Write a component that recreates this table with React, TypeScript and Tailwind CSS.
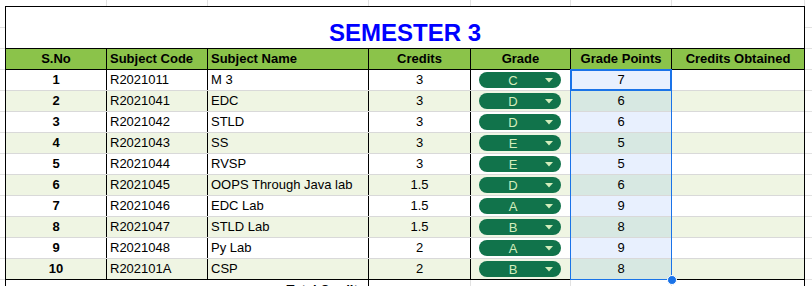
import { ChevronDown } from 'lucide-react';

type Row = { no: number; code: string; name: string; credits: string; grade: string; points: number };

const ROWS: Row[] = [
  { no: 1, code: 'R2021011', name: 'M 3', credits: '3', grade: 'C', points: 7 },
  { no: 2, code: 'R2021041', name: 'EDC', credits: '3', grade: 'D', points: 6 },
  { no: 3, code: 'R2021042', name: 'STLD', credits: '3', grade: 'D', points: 6 },
  { no: 4, code: 'R2021043', name: 'SS', credits: '3', grade: 'E', points: 5 },
  { no: 5, code: 'R2021044', name: 'RVSP', credits: '3', grade: 'E', points: 5 },
  { no: 6, code: 'R2021045', name: 'OOPS Through Java lab', credits: '1.5', grade: 'D', points: 6 },
  { no: 7, code: 'R2021046', name: 'EDC Lab', credits: '1.5', grade: 'A', points: 9 },
  { no: 8, code: 'R2021047', name: 'STLD Lab', credits: '1.5', grade: 'B', points: 8 },
  { no: 9, code: 'R2021048', name: 'Py Lab', credits: '2', grade: 'A', points: 9 },
  { no: 10, code: 'R202101A', name: 'CSP', credits: '2', grade: 'B', points: 8 },
];

// column widths incl. right border, so the lines land where the sheet has them
const COLS = 'grid grid-cols-[101px_101px_161px_102px_100px_101px_132px]';
const HEADERS = ['S.No', 'Subject Code', 'Subject Name', 'Credits', 'Grade', 'Grade Points', 'Credits Obtained'];

function GradeChip({ grade }: { grade: string }) {
  return (
    <div className="ml-[8px] mt-[2px] w-[82px] h-[16px] rounded-full bg-[#11734b] flex items-center text-[#d4edbc]">
      <span className="flex-1 text-center text-[13px] leading-none pl-[2px]">{grade}</span>
      <svg width="8" height="5" viewBox="0 0 8 5" className="mr-[8px]">
        <path d="M0 0h8L4 4.5z" fill="#d4edbc" />
      </svg>
    </div>
  );
}

function SideStrip({ w }: { w: string }) {
  return (
    <div className={`${w} flex flex-col`}>
      <div className="h-[22px] border-b border-[#e2e2e2]" />
      {Array.from({ length: 13 }).map((_, i) => (
        <div key={i} className="h-[21px] shrink-0 border-b border-[#e2e2e2]" />
      ))}
    </div>
  );
}

export default function App() {
  return (
    <div className="relative w-[812px] h-[286px] overflow-hidden bg-white text-black font-['Liberation_Sans',Arial,sans-serif]">
      {/* sheet gridlines above the table */}
      <div className="flex h-[6px]">
        <div className="w-[107px] border-r border-[#e2e2e2]" />
        <div className="w-[101px] border-r border-[#e2e2e2]" />
        <div className="w-[161px] border-r border-[#e2e2e2]" />
        <div className="w-[102px] border-r border-[#e2e2e2]" />
        <div className="w-[100px] border-r border-[#e2e2e2]" />
        <div className="w-[101px] border-r border-[#e2e2e2]" />
        <div className="w-[133px] border-r border-[#e2e2e2]" />
      </div>

      <div className="flex">
        <SideStrip w="w-[5px]" />

        <div className="w-[800px] border-l border-r border-t border-black">
          {/* Title */}
          <div className="h-[42px] border-b border-black flex items-end justify-center pb-[3px]">
            <span className="text-[24px] leading-[24px] font-bold text-[#0000ff]">SEMESTER 3</span>
          </div>

          {/* Header */}
          <div className={`${COLS} h-[21px] bg-[#8bc34a] border-b border-black text-[13px] font-bold`}>
            {HEADERS.map((h, i) => (
              <div
                key={h}
                className={`leading-[20px] text-center ${i < 6 ? 'border-r border-black' : ''} ${i === 1 || i === 2 ? 'text-left pl-[3px]' : ''}`}>
                {h}
              </div>
            ))}
          </div>

          {/* Body */}
          {ROWS.map((r) => {
            const striped = r.no % 2 === 0;
            return (
              <div
                key={r.no}
                className={`${COLS} h-[21px] text-[13px] leading-[20px] border-b ${r.no === 10 ? 'border-black' : 'border-[#d9d9d9]'} ${striped ? 'bg-[#eff5e3]' : 'bg-white'}`}>
                <div className="border-r border-black text-center font-bold">{r.no}</div>
                <div className="border-r border-black pl-[3px]">{r.code}</div>
                <div className="border-r border-black pl-[3px] whitespace-nowrap">{r.name}</div>
                <div className="border-r border-black text-center">{r.credits}</div>
                <div className="border-r border-black">
                  <GradeChip grade={r.grade} />
                </div>
                <div className={`border-r border-black text-center ${striped ? 'bg-[#d7e8e2]' : 'bg-[#e8f0fe]'}`}>{r.points}</div>
                <div />
              </div>
            );
          })}

          {/* Total row (cut off) */}
          <div className="grid grid-cols-[363px_102px_100px_101px_132px] h-[21px] text-[13px] leading-[20px]">
            <div className="border-r border-black text-right pr-[3px] font-bold">Total Credits</div>
            <div className="border-r border-[#e2e2e2]" />
            <div className="border-r border-[#e2e2e2]" />
            <div className="border-r border-[#e2e2e2]" />
            <div />
          </div>
        </div>

        <SideStrip w="w-[7px]" />
      </div>

      {/* selection overlay */}
      <div className="absolute left-[570px] top-[69px] w-[102px] h-[211px] border border-[#1a73e8] pointer-events-none" />
      <div className="absolute left-[570px] top-[69px] w-[102px] h-[22px] border-2 border-[#1a73e8] pointer-events-none" />
      <div className="absolute left-[667px] top-[275px] w-[10px] h-[10px] rounded-full bg-[#1a73e8] border border-white" />
    </div>
  );
}
